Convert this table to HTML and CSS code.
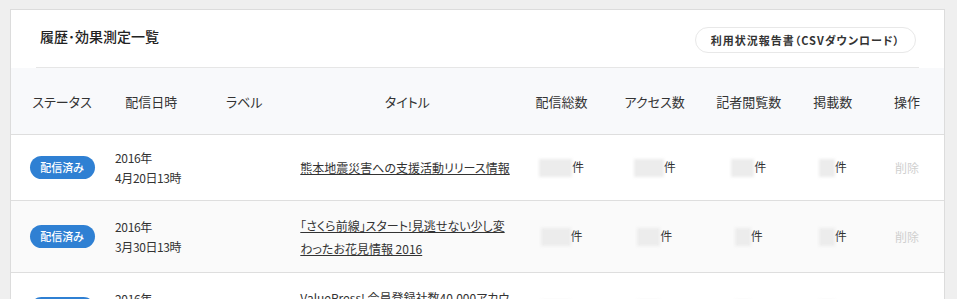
FILE: index.html
```html
<!DOCTYPE html>
<html lang="ja">
<head>
<meta charset="utf-8">
<title>履歴・効果測定一覧</title>
<link rel="stylesheet" href="styles.css">
</head>
<body>
<div class="card">
  <div class="card-head">
    <h2 class="card-title">履歴･効果測定一覧</h2>
    <button class="csv-btn" type="button">利用状況報告書（CSVダウンロード）</button>
  </div>
  <table class="history">
    <colgroup>
      <col class="c-status"><col class="c-date"><col class="c-label"><col class="c-title">
      <col class="c-total"><col class="c-access"><col class="c-press"><col class="c-pub"><col class="c-op">
    </colgroup>
    <thead>
      <tr>
        <th>ステータス</th><th>配信日時</th><th>ラベル</th><th>タイトル</th>
        <th>配信総数</th><th>アクセス数</th><th>記者閲覧数</th><th>掲載数</th><th>操作</th>
      </tr>
    </thead>
    <tbody>
      <tr>
        <td><span class="badge">配信済み</span></td>
        <td class="date">2016年<br>4月20日13時</td>
        <td></td>
        <td class="title"><a href="#">熊本地震災害への支援活動リリース情報</a></td>
        <td class="num"><span class="blur b33"></span>件</td>
        <td class="num"><span class="blur b30"></span>件</td>
        <td class="num"><span class="blur b23"></span>件</td>
        <td class="num"><span class="blur b16"></span>件</td>
        <td class="op">削除</td>
      </tr>
      <tr class="alt">
        <td><span class="badge">配信済み</span></td>
        <td class="date">2016年<br>3月30日13時</td>
        <td></td>
        <td class="title"><a href="#">｢さくら前線｣スタート!見逃せない少し変わったお花見情報 2016</a></td>
        <td class="num"><span class="blur b30"></span>件</td>
        <td class="num"><span class="blur b23"></span>件</td>
        <td class="num"><span class="blur b16"></span>件</td>
        <td class="num"><span class="blur b16"></span>件</td>
        <td class="op">削除</td>
      </tr>
      <tr>
        <td><span class="badge">配信済み</span></td>
        <td class="date">2016年<br>3月1日13時</td>
        <td></td>
        <td class="title"><a href="#">ValuePress! 会員登録社数40,000アカウント突破のお知らせ</a></td>
        <td class="num"><span class="blur b30"></span>件</td>
        <td class="num"><span class="blur b23"></span>件</td>
        <td class="num"><span class="blur b16"></span>件</td>
        <td class="num"><span class="blur b16"></span>件</td>
        <td class="op">削除</td>
      </tr>
    </tbody>
  </table>
</div>
</body>
</html>
```

FILE: styles.css
```css
html, body {
  margin: 0;
  background: #efefef;
}
body {
  padding: 9px 12px 0 10px;
  font-family: "Noto Sans CJK JP", "Noto Sans", sans-serif;
  color: #333;
  font-feature-settings: "palt";
}
.card {
  background: #fff;
  border: 1px solid #dcdcdc;
}
.card-head {
  margin: 0 25px;
  padding: 0 3px 0 4px;
  height: 57px;
  border-bottom: 1px solid #e6e6e6;
  display: flex;
  justify-content: space-between;
  align-items: flex-start;
}
.card-title {
  margin: 16px 0 0;
  font-size: 14px;
  line-height: 20px;
  font-weight: 500;
  color: #222;
}
.csv-btn {
  margin-top: 17px;
  height: 26px;
  padding: 0 15px;
  border: 1px solid #e8e8e8;
  border-radius: 13px;
  background: #fff;
  font-family: inherit;
  font-feature-settings: "palt";
  font-size: 11px;
  font-weight: 700;
  letter-spacing: 1px;
  color: #333;
}
.history {
  width: 100%;
  table-layout: fixed;
  border-collapse: collapse;
}
.c-status { width: 102px; }
.c-date { width: 76px; }
.c-label { width: 110px; }
.c-title { width: 216px; }
.c-total { width: 92px; }
.c-access { width: 94px; }
.c-press { width: 94px; }
.c-pub { width: 74px; }
.c-op { width: 74px; }
.history thead tr {
  background: #f8f9fb;
}
.history th {
  height: 66px;
  padding: 0;
  font-size: 13px;
  font-weight: 400;
  color: #333;
  text-align: center;
  border-bottom: 1px solid #dedede;
}
.history td {
  padding: 12.5px 0;
  font-size: 12px;
  text-align: center;
  vertical-align: middle;
  border-bottom: 1px solid #dedede;
}
.history tr.alt {
  background: #fafafa;
}
.badge {
  display: inline-block;
  width: 65px;
  height: 23px;
  line-height: 23px;
  border-radius: 12px;
  background: #2f80d3;
  color: #fff;
  font-size: 11px;
  font-weight: 500;
}
.history td.date {
  text-align: left;
  padding-left: 2px;
  line-height: 20px;
  letter-spacing: -0.4px;
}
.history td.title {
  text-align: left;
  padding-left: 1px;
  line-height: 23px;
}
.title a {
  color: #333;
  text-decoration: underline;
}
.num {
  white-space: nowrap;
}
.blur {
  display: inline-block;
  height: 18px;
  vertical-align: middle;
  background: #ececec;
  filter: blur(1.5px);
}
.b33 { width: 33px; }
.b30 { width: 30px; }
.b23 { width: 23px; }
.b16 { width: 16px; }
.history td.op {
  color: #cfcfcf;
}
```
